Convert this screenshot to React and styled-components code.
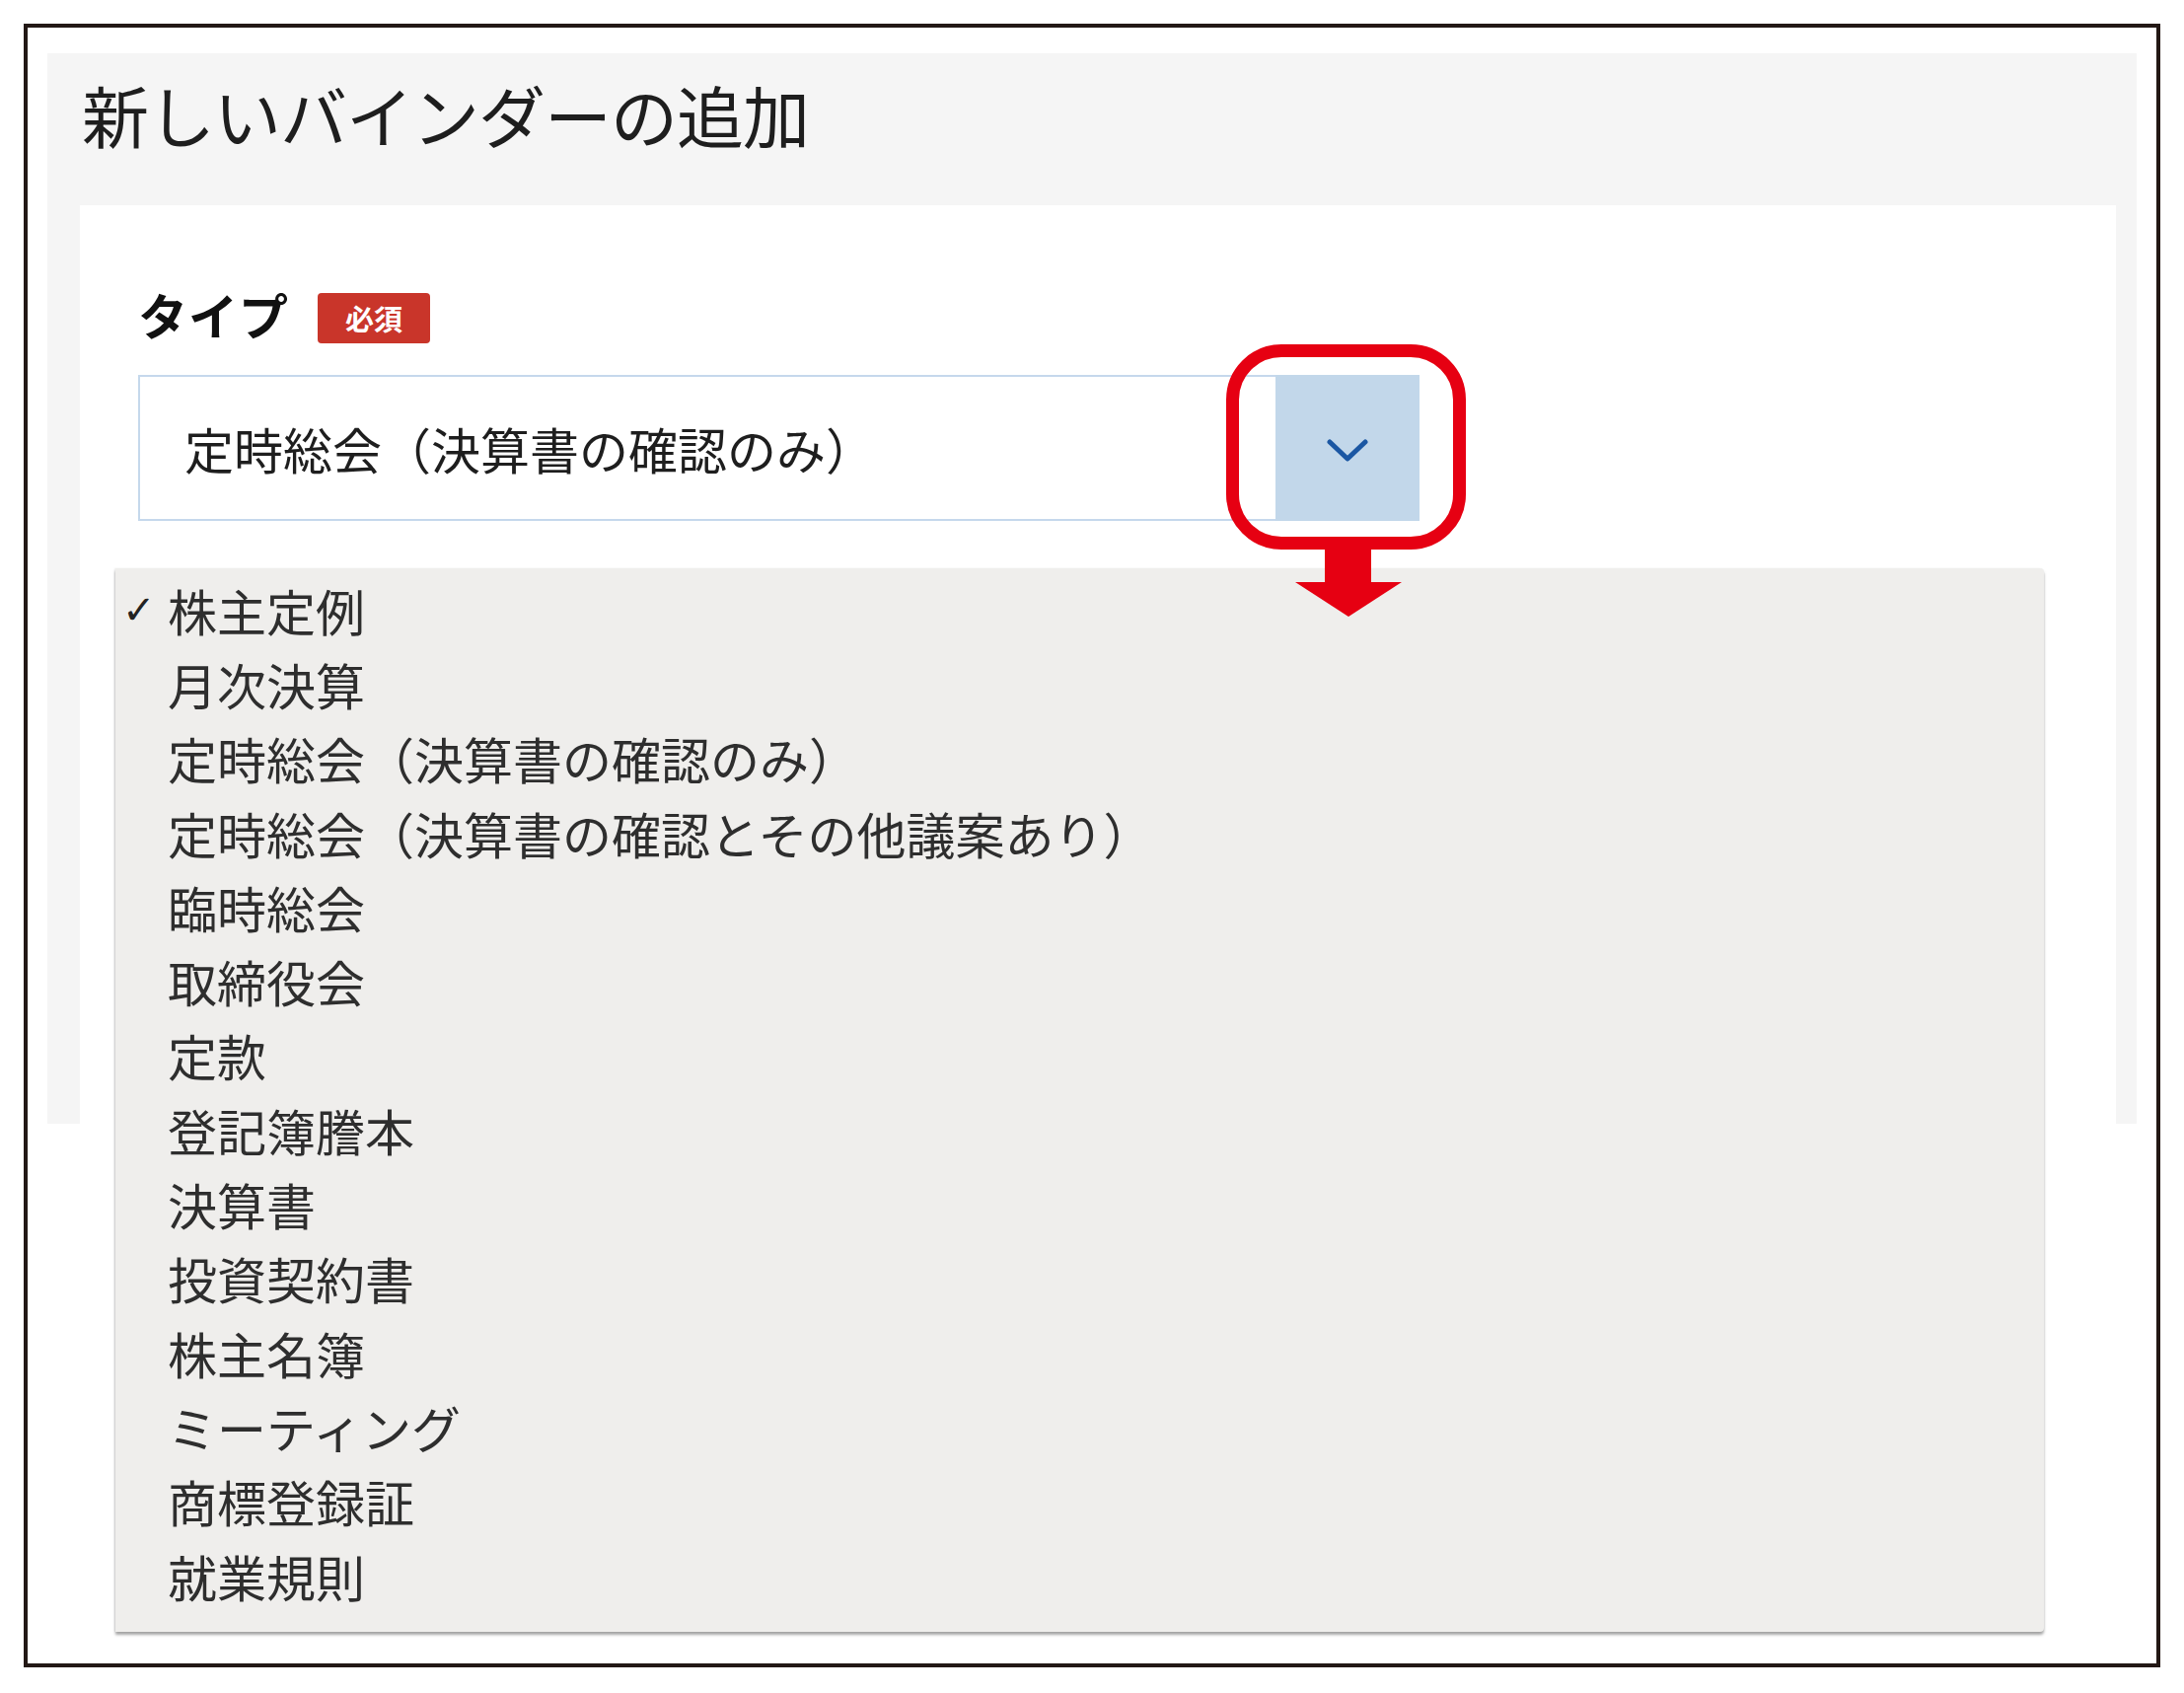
import styled, { createGlobalStyle } from "styled-components";

const GlobalStyle = createGlobalStyle`
  html, body {
    margin: 0;
    padding: 0;
    background: #ffffff;
  }
  body {
    font-family: "Noto Sans CJK JP", "Noto Sans", sans-serif;
    color: #222;
  }
`;

const options = [
  "株主定例",
  "月次決算",
  "定時総会（決算書の確認のみ）",
  "定時総会（決算書の確認とその他議案あり）",
  "臨時総会",
  "取締役会",
  "定款",
  "登記簿謄本",
  "決算書",
  "投資契約書",
  "株主名簿",
  "ミーティング",
  "商標登録証",
  "就業規則",
];

function App() {
  return (
    <>
      <GlobalStyle />
      <Frame>
        <Panel>
          <Title>新しいバインダーの追加</Title>
          <Card>
            <LabelRow>
              <Label>タイプ</Label>
              <Badge>必須</Badge>
            </LabelRow>
            <Select>
              <SelectValue>定時総会（決算書の確認のみ）</SelectValue>
              <SelectButton>
                <svg width="42" height="26" viewBox="0 0 42 26">
                  <path
                    d="M3 4 L21 21 L39 4"
                    fill="none"
                    stroke="#1b57a3"
                    strokeWidth="5"
                    strokeLinecap="round"
                    strokeLinejoin="round"
                  />
                </svg>
              </SelectButton>
            </Select>
          </Card>
        </Panel>

        <Menu>
          {options.map((o, i) => (
            <MenuItem key={o}>
              <Check>{i === 0 ? "✓" : ""}</Check>
              {o}
            </MenuItem>
          ))}
        </Menu>

        <Highlight />
        <Arrow viewBox="0 0 108 72" width="108" height="72">
          <rect x="30" y="0" width="47" height="38" fill="#e60012" />
          <polygon points="0,37 108,37 54,72" fill="#e60012" />
        </Arrow>
      </Frame>
    </>
  );
}

const Frame = styled.div`
  position: relative;
  box-sizing: border-box;
  margin: 24px;
  width: 2166px;
  height: 1666px;
  border: 4px solid #231815;
  padding: 26px 20px 0 20px;
`;

const Panel = styled.div`
  background: #f5f5f5;
  padding: 0 21px 0 33px;
  display: flex;
  flex-direction: column;
`;

const Title = styled.h1`
  margin: 0;
  padding: 28px 0 0 2px;
  height: 154px;
  box-sizing: border-box;
  font-size: 68px;
  line-height: 68px;
  font-weight: 400;
  color: #1e1e1e;
  letter-spacing: -1px;
`;

const Card = styled.div`
  background: #ffffff;
  height: 931px;
  box-sizing: border-box;
  padding: 80px 0 0 59px;
  display: flex;
  flex-direction: column;
  gap: 32px;
`;

const LabelRow = styled.div`
  display: flex;
  align-items: center;
  gap: 29px;
  height: 60px;
`;

const Label = styled.span`
  font-size: 50px;
  line-height: 60px;
  font-weight: 700;
  color: #111;
  letter-spacing: 1px;
`;

const Badge = styled.span`
  display: inline-flex;
  align-items: center;
  justify-content: center;
  width: 114px;
  height: 51px;
  margin-top: 8px;
  border-radius: 4px;
  background: #c9352a;
  color: #ffffff;
  font-size: 29px;
  font-weight: 700;
`;

const Select = styled.div`
  display: flex;
  width: 1299px;
  height: 148px;
`;

const SelectValue = styled.div`
  flex: 1;
  box-sizing: border-box;
  border: 2px solid #c5d8ec;
  border-right: none;
  display: flex;
  align-items: center;
  padding-left: 45px;
  font-size: 50px;
  color: #1e1e1e;
`;

const SelectButton = styled.div`
  width: 146px;
  background: #c2d7ea;
  display: flex;
  align-items: center;
  justify-content: center;
  padding-top: 6px;
  box-sizing: border-box;
`;

const Menu = styled.ul`
  position: absolute;
  left: 89px;
  top: 548px;
  width: 1955px;
  height: 1078px;
  box-sizing: border-box;
  margin: 0;
  padding: 4px 0 0 0;
  list-style: none;
  background: #efeeec;
  box-shadow: 0 3px 3px rgba(0, 0, 0, 0.35), -1px 0 2px rgba(0, 0, 0, 0.08);
  border-radius: 0 4px 4px 0;
`;

const MenuItem = styled.li`
  display: flex;
  align-items: center;
  height: 75.3px;
  padding-left: 7px;
  font-size: 50px;
  color: #2e2e2e;
`;

const Check = styled.span`
  width: 46px;
  font-family: "DejaVu Sans", sans-serif;
  font-size: 40px;
  font-weight: 700;
  color: #222;
`;

const Highlight = styled.div`
  position: absolute;
  left: 1215px;
  top: 321px;
  width: 243px;
  height: 208px;
  box-sizing: border-box;
  border: 13px solid #e60012;
  border-radius: 56px;
  z-index: 2;
`;

const Arrow = styled.svg`
  position: absolute;
  left: 1285px;
  top: 525px;
  z-index: 3;
`;

export default App;
